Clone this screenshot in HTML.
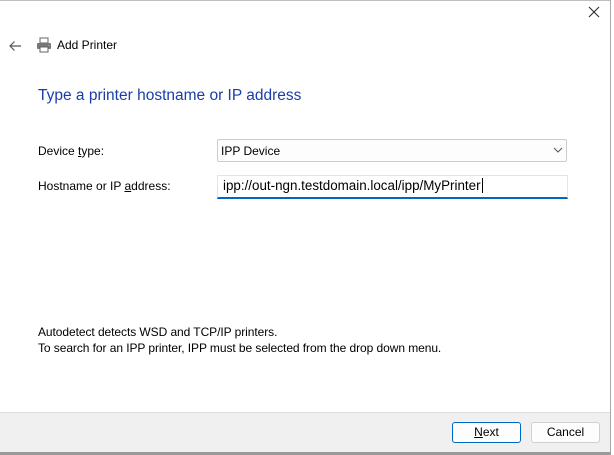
<!DOCTYPE html><html><head><style>
body{margin:0;width:614px;height:455px;background:#fff;position:relative;overflow:hidden;font-family:"Liberation Sans",sans-serif;font-size:12px;color:#000}
.a{position:absolute}
</style></head><body>
<div class="a" style="left:0;top:0;width:611px;height:1px;background:#bdbdbd"></div>
<div class="a" style="left:610px;top:0;width:1px;height:453px;background:#a8a8a8"></div>
<div class="a" style="left:611px;top:0;width:3px;height:455px;background:#fff"></div>
<div class="a" style="left:0;top:412px;width:610px;height:40px;background:#f0f0f0;border-top:1px solid #dfdfdf"></div>
<div class="a" style="left:0;top:452px;width:611px;height:3px;background:#9a9a9a"></div>
<svg class="a" style="left:588px;top:6px" width="12" height="12"><path d="M1 1L11 11M11 1L1 11" stroke="#222" stroke-width="1"/></svg>
<svg class="a" style="left:8px;top:40px" width="14" height="12"><path d="M13 6H2M6.5 1.5L2 6l4.5 4.5" stroke="#555" stroke-width="1.2" fill="none"/></svg>
<svg class="a" style="left:36px;top:37px" width="16" height="16"><rect x="4" y="1" width="8" height="5" fill="#fff" stroke="#666"/><rect x="1" y="6" width="14" height="6" rx="1" fill="#777"/><rect x="4" y="10" width="8" height="5" fill="#fff" stroke="#666"/><rect x="12" y="8" width="2" height="1" fill="#4c4"/></svg>
<div class="a" style="left:57px;top:38px;font-size:12px">Add Printer</div>
<div class="a" style="left:38px;top:87px;font-size:15.5px;color:#1a3ea8">Type a printer hostname or IP address</div>
<div class="a" style="left:38px;top:144px">Device <u>t</u>ype:</div>
<div class="a" style="left:38px;top:179px">Hostname or IP <u>a</u>ddress:</div>
<div class="a" style="left:217px;top:139px;width:348px;height:21px;border:1px solid #ccc;border-radius:2px;background:#fdfdfd"></div>
<div class="a" style="left:221px;top:144px">IPP Device</div>
<svg class="a" style="left:553px;top:147px" width="10" height="6"><path d="M1 1l4 4 4-4" stroke="#555" fill="none"/></svg>
<div class="a" style="left:217px;top:175px;width:349px;height:21px;border:1px solid #e4e4e4;border-bottom:2px solid #0067c0;background:#fff"></div>
<div class="a" style="left:223px;top:178px;font-size:13.4px">ipp://out-ngn.testdomain.local/ipp/MyPrinter<span style="border-left:1px solid #000;margin-left:1px"> </span></div>
<div class="a" style="left:38px;top:324px;line-height:16px;letter-spacing:-0.07px">Autodetect detects WSD and TCP/IP printers.<br>To search for an IPP printer, IPP must be selected from the drop down menu.</div>
<div class="a" style="left:452px;top:422px;width:67px;height:19px;border:1px solid #0067c0;border-radius:3px;background:#fdfdfd;text-align:center;line-height:19px"><u>N</u>ext</div>
<div class="a" style="left:531px;top:422px;width:67px;height:19px;border:1px solid #d0d0d0;border-radius:3px;background:#fdfdfd;text-align:center;line-height:19px">Cancel</div>
</body></html>
